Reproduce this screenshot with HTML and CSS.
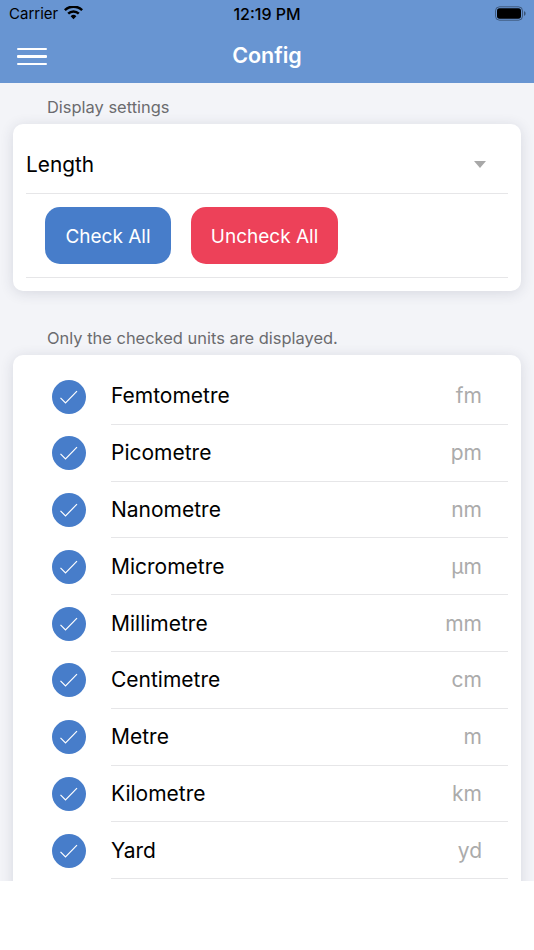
FILE: index.html
```html
<!DOCTYPE html>
<html lang="en">
<head>
<meta charset="utf-8">
<title>Config</title>
<link rel="stylesheet" href="styles.css">
</head>
<body>
<div class="screen">
  <header class="header">
    <div class="status">
      <div class="status-left">
        <span>Carrier</span>
        <svg class="wifi" viewBox="0 0 20 14"><path d="M10 13.6 7 10.4a4.3 4.3 0 0 1 6 0ZM5.3 8.7 3.5 6.8a9.2 9.2 0 0 1 13 0l-1.8 1.9a6.7 6.7 0 0 0-9.4 0ZM1.8 5 0 3.1a14.2 14.2 0 0 1 20 0L18.2 5A11.7 11.7 0 0 0 1.8 5Z" fill="#000"/></svg>
      </div>
      <span class="time">12:19 PM</span>
      <svg class="battery" viewBox="0 0 31 15"><rect x=".5" y=".8" width="27" height="13.4" rx="4" fill="none" stroke="#000" stroke-opacity=".4"/><rect x="2" y="2.3" width="24" height="10.4" rx="2.6" fill="#000"/><path d="M29 5.2c1 .3 1.6 1.2 1.6 2.3s-.6 2-1.6 2.3Z" fill="#000" fill-opacity=".45"/></svg>
    </div>
    <div class="navbar">
      <div class="menu" aria-label="Menu"><i></i><i></i><i></i></div>
      <h1>Config</h1>
    </div>
  </header>
  <main class="content">
    <p class="label first">Display settings</p>
    <section class="card settings">
      <div class="select"><span>Length</span><b class="caret"></b></div>
      <div class="actions">
        <button class="btn blue">Check All</button>
        <button class="btn red">Uncheck All</button>
      </div>
    </section>
    <p class="label second">Only the checked units are displayed.</p>
    <section class="card units">
      <div class="unit"><span class="check"><svg viewBox="0 0 34 34"><path d="M8.5 17.8l5 5L25 11.2"/></svg></span><div class="unit-body"><span class="name">Femtometre</span><span class="abbr">fm</span></div></div>
      <div class="unit"><span class="check"><svg viewBox="0 0 34 34"><path d="M8.5 17.8l5 5L25 11.2"/></svg></span><div class="unit-body"><span class="name">Picometre</span><span class="abbr">pm</span></div></div>
      <div class="unit"><span class="check"><svg viewBox="0 0 34 34"><path d="M8.5 17.8l5 5L25 11.2"/></svg></span><div class="unit-body"><span class="name">Nanometre</span><span class="abbr">nm</span></div></div>
      <div class="unit"><span class="check"><svg viewBox="0 0 34 34"><path d="M8.5 17.8l5 5L25 11.2"/></svg></span><div class="unit-body"><span class="name">Micrometre</span><span class="abbr">µm</span></div></div>
      <div class="unit"><span class="check"><svg viewBox="0 0 34 34"><path d="M8.5 17.8l5 5L25 11.2"/></svg></span><div class="unit-body"><span class="name">Millimetre</span><span class="abbr">mm</span></div></div>
      <div class="unit"><span class="check"><svg viewBox="0 0 34 34"><path d="M8.5 17.8l5 5L25 11.2"/></svg></span><div class="unit-body"><span class="name">Centimetre</span><span class="abbr">cm</span></div></div>
      <div class="unit"><span class="check"><svg viewBox="0 0 34 34"><path d="M8.5 17.8l5 5L25 11.2"/></svg></span><div class="unit-body"><span class="name">Metre</span><span class="abbr">m</span></div></div>
      <div class="unit"><span class="check"><svg viewBox="0 0 34 34"><path d="M8.5 17.8l5 5L25 11.2"/></svg></span><div class="unit-body"><span class="name">Kilometre</span><span class="abbr">km</span></div></div>
      <div class="unit"><span class="check"><svg viewBox="0 0 34 34"><path d="M8.5 17.8l5 5L25 11.2"/></svg></span><div class="unit-body"><span class="name">Yard</span><span class="abbr">yd</span></div></div>
    </section>
  </main>
</div>
</body>
</html>
```
FILE: styles.css
```css
* { box-sizing: border-box; }
html, body { margin: 0; padding: 0; background: #fff; }
body { font-family: Inter, "Liberation Sans", sans-serif; color: #000; }
.screen { width: 534px; height: 950px; overflow: hidden; }
.header { height: 83px; background: #6895d2; }
.status { height: 27px; display: flex; align-items: center; justify-content: space-between; padding: 0 8px 0 9px; position: relative; font-size: 15px; }
.status-left { display: flex; align-items: center; gap: 7px; }
.wifi { width: 19px; height: 14px; margin-top: -2px; margin-left: -1px; }
.time { position: absolute; left: 0; right: 0; text-align: center; font-size: 16px; font-weight: 500; }
.battery { width: 31px; height: 15px; }
.navbar { height: 56px; position: relative; display: flex; align-items: center; justify-content: center; }
.navbar h1 { margin: 0; font-size: 21.5px; font-weight: 600; color: #fff; }
.menu { position: absolute; left: 17px; top: 21px; width: 30px; height: 17px; display: flex; flex-direction: column; justify-content: space-between; }
.menu i { display: block; height: 2.4px; background: #fff; border-radius: 1px; }
.content { height: 798px; background: #f3f4f8; padding: 0 13px; overflow: hidden; }
.label { margin: 0; padding-left: 34px; font-size: 16.45px; line-height: 20px; color: #6b6b6e; }
.label.first { padding-top: 14px; height: 41px; }
.label.second { margin-top: 37px; height: 27px; padding-top: 0; }
.card { background: #fff; border-radius: 10px; box-shadow: 0 2px 14px rgba(40, 50, 80, .14); padding: 0 13px; }
.settings { height: 167px; }
.select { height: 70px; border-bottom: 1px solid #e6e6e8; display: flex; align-items: center; justify-content: space-between; font-size: 20.8px; padding: 25px 22px 13px 0; }
.caret { width: 0; height: 0; border: 6.5px solid transparent; border-top: 7px solid #a8a8a8; border-bottom: 0; }
.actions { height: 84px; border-bottom: 1px solid #e6e6e8; display: flex; align-items: flex-start; gap: 20px; padding: 13px 0 0 19px; }
.btn { height: 57px; border: 0; border-radius: 15px; color: #fff; font: 400 19px Inter, "Liberation Sans", sans-serif; padding: 2px 0 0; box-shadow: 0 0 0 .5px rgba(255,255,255,.6); }
.btn.blue { width: 126px; background: #477dca; }
.btn.red { width: 147px; background: #ed4159; }
.units { height: 600px; padding: 13px 13px 0 39px; border-radius: 10px 10px 0 0; }
.unit { display: flex; height: 56.8px; align-items: stretch; }
.check { width: 34px; height: 34px; border-radius: 50%; background: #477dca; margin-top: 11.5px; flex: none; }
.check svg { display: block; width: 34px; height: 34px; fill: none; stroke: #fff; stroke-width: 1.2; }
.unit-body { flex: 1; margin-left: 25px; border-bottom: 1px solid #e6e6e8; display: flex; align-items: center; justify-content: space-between; padding-right: 26px; font-size: 21px; }
.abbr { color: #ababab; }
```
